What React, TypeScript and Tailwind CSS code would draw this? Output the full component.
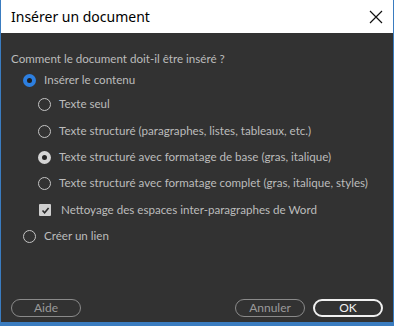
import React from "react";

const font = { fontFamily: "Lato, 'Open Sans', sans-serif" };

function Radio({ kind }: { kind: "blue" | "gray" | "off" }) {
  if (kind === "blue")
    return (
      <span className="w-[13px] h-[13px] rounded-full border-[4px] border-[#2d7fe0] bg-[#1e1e1e] shrink-0" />
    );
  if (kind === "gray")
    return (
      <span className="w-[13px] h-[13px] rounded-full border-[4px] border-[#d4d4d4] bg-[#222] shrink-0" />
    );
  return <span className="w-[13px] h-[13px] rounded-full border-[1.5px] border-[#c4c4c4] shrink-0" />;
}

function Row({ kind, label, indent, mt }: { kind: "blue" | "gray" | "off"; label: string; indent: boolean; mt: string }) {
  return (
    <div className={`flex items-center h-[16px] ${mt} ${indent ? "pl-[27px]" : "pl-[12px]"}`}>
      <Radio kind={kind} />
      <span className="ml-[8px] text-[11.6px] text-[#bcbcbc] whitespace-nowrap">{label}</span>
    </div>
  );
}

export default function App() {
  return (
    <div className="w-[394px] h-[326px] bg-[#323232] border-x border-b-[4px] border-[#3a7cc0] flex flex-col" style={font}>
      <div className="h-[33px] bg-white flex items-center justify-between pl-[10px] pr-[10px] shrink-0">
        <span className="text-[14px] text-black" style={{ fontFamily: "'Noto Sans', 'Open Sans', sans-serif" }}>
          Insérer un document
        </span>
        <svg width="14" height="14" viewBox="0 0 14 14">
          <path d="M1 1 L13 13 M13 1 L1 13" stroke="#111" strokeWidth="1.2" />
        </svg>
      </div>
      <div className="flex flex-col flex-1 pl-[10px] pr-[10px]">
        <div className="mt-[18px] h-[16px] flex items-center text-[11.6px] text-[#bcbcbc] whitespace-nowrap">
          Comment le document doit-il être inséré ?
        </div>
        <Row kind="blue" label="Insérer le contenu" indent={false} mt="mt-[5px]" />
        <Row kind="off" label="Texte seul" indent mt="mt-[8px]" />
        <Row kind="off" label="Texte structuré (paragraphes, listes, tableaux, etc.)" indent mt="mt-[11px]" />
        <Row kind="gray" label="Texte structuré avec formatage de base (gras, italique)" indent mt="mt-[10px]" />
        <Row kind="off" label="Texte structuré avec formatage complet (gras, italique, styles)" indent mt="mt-[10px]" />
        <div className="flex items-center h-[16px] mt-[11px] pl-[28px]">
          <span className="w-[12px] h-[12px] bg-[#cfcfcf] rounded-[1px] flex items-center justify-center shrink-0">
            <svg width="9" height="9" viewBox="0 0 9 9">
              <path d="M1.5 4.5 L3.6 6.7 L7.6 2" stroke="#2a2a2a" strokeWidth="1.6" fill="none" />
            </svg>
          </span>
          <span className="ml-[10px] text-[11.6px] text-[#bcbcbc] whitespace-nowrap">
            Nettoyage des espaces inter-paragraphes de Word
          </span>
        </div>
        <Row kind="off" label="Créer un lien" indent={false} mt="mt-[10px]" />
        <div className="flex-1" />
        <div className="flex items-center mb-[5px] h-[18px]">
          <button className="w-[70px] h-[18px] rounded-full border border-[#8a8a8a] text-[12px] text-[#9a9a9a] leading-none">
            Aide
          </button>
          <div className="flex-1" />
          <button className="w-[70px] h-[18px] rounded-full border border-[#8a8a8a] text-[12px] text-[#9a9a9a] leading-none">
            Annuler
          </button>
          <button className="ml-[8px] w-[70px] h-[18px] rounded-full border-2 border-[#f0f0f0] text-[12px] text-[#f0f0f0] leading-none">
            OK
          </button>
        </div>
      </div>
    </div>
  );
}
